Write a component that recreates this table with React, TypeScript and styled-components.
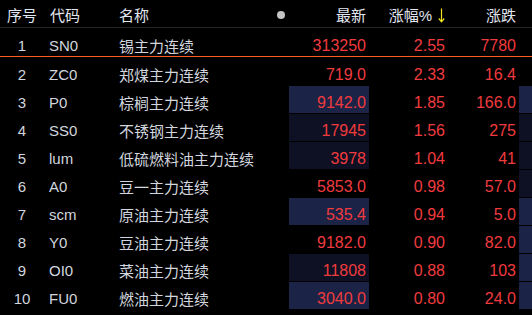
import styled, { createGlobalStyle } from "styled-components";

type Shade = "navy" | "dark" | undefined;

interface Quote {
  code: string;
  name: string;
  last: string;
  pct: string;
  change: string;
  lastShade?: Shade;
  sideShade?: Shade;
}

const quotes: Quote[] = [
  { code: "SN0", name: "锡主力连续", last: "313250", pct: "2.55", change: "7780" },
  { code: "ZC0", name: "郑煤主力连续", last: "719.0", pct: "2.33", change: "16.4" },
  { code: "P0", name: "棕榈主力连续", last: "9142.0", pct: "1.85", change: "166.0", lastShade: "navy", sideShade: "navy" },
  { code: "SS0", name: "不锈钢主力连续", last: "17945", pct: "1.56", change: "275", lastShade: "dark", sideShade: "dark" },
  { code: "lum", name: "低硫燃料油主力连续", last: "3978", pct: "1.04", change: "41", lastShade: "dark", sideShade: "dark" },
  { code: "A0", name: "豆一主力连续", last: "5853.0", pct: "0.98", change: "57.0", sideShade: "dark" },
  { code: "scm", name: "原油主力连续", last: "535.4", pct: "0.94", change: "5.0", lastShade: "navy", sideShade: "navy" },
  { code: "Y0", name: "豆油主力连续", last: "9182.0", pct: "0.90", change: "82.0", sideShade: "navy" },
  { code: "OI0", name: "菜油主力连续", last: "11808", pct: "0.88", change: "103", lastShade: "dark", sideShade: "navy" },
  { code: "FU0", name: "燃油主力连续", last: "3040.0", pct: "0.80", change: "24.0", lastShade: "navy", sideShade: "navy" },
];

const shadeColor = (s: Shade) =>
  s === "navy" ? "#1b2346" : s === "dark" ? "#0e1123" : "transparent";

const App = () => {
  return (
    <>
      <GlobalStyle />
      <Board>
        <HeaderRow>
          <HeadCell>序号</HeadCell>
          <HeadCell $pad={12}>代码</HeadCell>
          <NameHead>
            <span>名称</span>
            <Dot />
          </NameHead>
          <HeadCell $right>最新</HeadCell>
          <HeadCell $right>
            涨幅%
            <SortArrow width="7" height="15" viewBox="0 0 7 15">
              <path d="M3.5 0.5V13.5M0.8 10.5L3.5 13.8L6.2 10.5" stroke="#f2e41c" strokeWidth="1.2" fill="none" />
            </SortArrow>
          </HeadCell>
          <HeadCell $right>涨跌</HeadCell>
          <div />
        </HeaderRow>
        {quotes.map((q, i) => (
          <Row key={q.code} $first={i === 0}>
            <IndexCell>{i + 1}</IndexCell>
            <TextCell $pad={11}>{q.code}</TextCell>
            <TextCell>{q.name}</TextCell>
            <NumCell $shade={q.lastShade}>{q.last}</NumCell>
            <NumCell>{q.pct}</NumCell>
            <NumCell>{q.change}</NumCell>
            <SideCell $shade={q.sideShade} />
          </Row>
        ))}
      </Board>
    </>
  );
};

export default App;

const GlobalStyle = createGlobalStyle`
  html, body {
    margin: 0;
    background: #000;
  }
  body {
    font-family: "Liberation Sans", "Noto Sans CJK SC", sans-serif;
    font-size: 15px;
  }
`;

const Board = styled.div`
  width: 532px;
  height: 315px;
  overflow: hidden;
  background: #000;
`;

const columns = "38px 81px 170px 80px 79px 71px 1fr";

const HeaderRow = styled.div`
  display: grid;
  grid-template-columns: ${columns};
  height: 27px;
  border-bottom: 1px solid #262626;
  color: #e2e6f0;
`;

const HeadCell = styled.div<{ $right?: boolean; $pad?: number }>`
  display: flex;
  align-items: center;
  justify-content: ${(p) => (p.$right ? "flex-end" : "flex-start")};
  padding: 2px ${(p) => (p.$right ? "3px" : "0")} 0 ${(p) => (p.$right ? 0 : p.$pad ?? 7)}px;
  white-space: nowrap;
`;

const NameHead = styled.div`
  display: flex;
  align-items: center;
  justify-content: space-between;
  padding: 2px 4px 0 0;
`;

const Dot = styled.span`
  width: 8px;
  height: 8px;
  border-radius: 50%;
  background: #c4c4c4;
`;

const SortArrow = styled.svg`
  margin-left: 6px;
  margin-top: 1px;
`;

const Row = styled.div<{ $first?: boolean }>`
  display: grid;
  grid-template-columns: ${columns};
  height: 28px;
  border-bottom: ${(p) => (p.$first ? "1px solid #ff5a1e" : "none")};
  color: #d2d6df;
`;

const IndexCell = styled.div`
  display: flex;
  align-items: center;
  justify-content: center;
  padding: 7px 0 0 6px;
`;

const TextCell = styled.div<{ $pad?: number }>`
  display: flex;
  align-items: center;
  padding: 7px 0 0 ${(p) => p.$pad ?? 0}px;
  white-space: nowrap;
`;

const NumCell = styled.div<{ $shade?: Shade }>`
  display: flex;
  align-items: center;
  justify-content: flex-end;
  height: 27px;
  margin-top: 1px;
  box-sizing: border-box;
  padding: 6px 3px 0 0;
  font-size: 16px;
  color: #f03b3e;
  background: ${(p) => shadeColor(p.$shade)};
`;

const SideCell = styled.div<{ $shade?: Shade }>`
  height: 27px;
  margin-top: 1px;
  background: ${(p) => shadeColor(p.$shade)};
`;
